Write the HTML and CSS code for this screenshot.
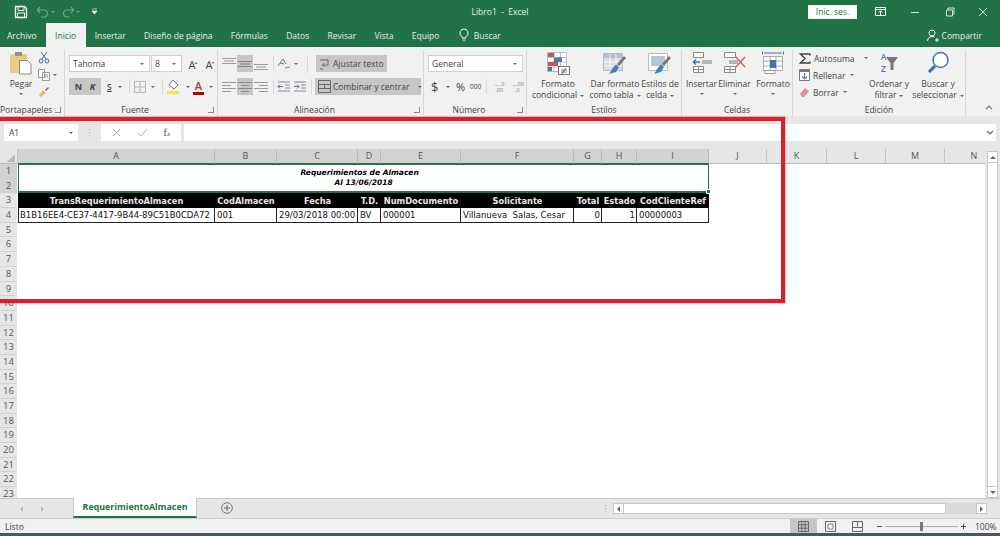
FILE: index.html
```html
<!DOCTYPE html>
<html lang="es">
<head>
  <meta charset="UTF-8">
  <title>Libro1 - Excel</title>
  <link rel="stylesheet" href="styles.css">
</head>
<body>

<svg class="defs" width="0" height="0">
  <symbol id="al-top" viewBox="0 0 16 14"><path d="M1 1.5h14M3 4h10M1 6.5h14" stroke="#999" fill="none"/></symbol>
  <symbol id="al-mid" viewBox="0 0 16 14"><path d="M1 4.5h14M3 7h10M1 9.5h14" stroke="#888" fill="none"/></symbol>
  <symbol id="al-bot" viewBox="0 0 16 14"><path d="M1 7.5h14M3 10h10M1 12.5h14" stroke="#999" fill="none"/></symbol>
  <symbol id="al-left" viewBox="0 0 16 14"><path d="M1 2.5h14M1 5.500h9M1 8.500h14M1 11.500h9" stroke="#999" fill="none"/></symbol>
  <symbol id="al-center" viewBox="0 0 16 14"><path d="M1 2.500h14M4 5.500h8M1 8.500h14M4 11.500h8" stroke="#888" fill="none"/></symbol>
  <symbol id="al-right" viewBox="0 0 16 14"><path d="M1 2.500h14M6 5.500h9M1 8.500h14M6 11.500h9" stroke="#999" fill="none"/></symbol>
</svg>

<div class="titlebar">
  <div class="qat">
    <svg width="14" height="14" viewBox="0 0 14 14"><path d="M1.500 1.500h9l2 2v9h-11z" fill="none" stroke="#fff" stroke-width="1.300"/><path d="M4 2v3.500h6V2M3.500 12.500V8h7v4.500" fill="none" stroke="#fff"/></svg>
    <svg class="undo" width="14" height="12" viewBox="0 0 14 12"><path d="M4 1 1.500 4 4 7M2 4h6a3.500 3.500 0 0 1 0 7H5" fill="none" stroke="#6fa98b" stroke-width="1.200"/></svg>
    <i class="caret pale"></i>
    <svg class="redo" width="14" height="12" viewBox="0 0 14 12"><path d="M10 1l2.500 3L10 7M12 4H6a3.500 3.500 0 0 0 0 7h3" fill="none" stroke="#6fa98b" stroke-width="1.200"/></svg>
    <i class="caret pale"></i>
    <svg class="custom" width="7" height="7" viewBox="0 0 7 7"><path d="M1 1h5M1 3h5l-2.500 3z" fill="#fff" stroke="#fff" stroke-width=".6"/></svg>
  </div>
  <div class="doc-title">Libro1 &nbsp;-&nbsp; Excel</div>
  <div class="win-controls">
    <span class="signin">Inic. ses.</span>
    <svg class="ctl-display" width="12" height="10" viewBox="0 0 12 10"><path d="M.5.500h10v8H.5zM.5 2.500h10M5.500 8V4M3.800 5.500l1.700-1.700 1.700 1.700" fill="none" stroke="#fff"/></svg>
    <svg class="ctl-min" width="10" height="10" viewBox="0 0 10 10"><path d="M1 5.500h8" stroke="#d7e6dd"/></svg>
    <svg class="ctl-max" width="10" height="10" viewBox="0 0 10 10"><path d="M1.500 3h6v6h-6zM3 3V1h6v6H7.500" fill="none" stroke="#d7e6dd"/></svg>
    <svg class="ctl-close" width="10" height="10" viewBox="0 0 10 10"><path d="M1 1l8 8M9 1 1 9" stroke="#d7e6dd"/></svg>
  </div>
</div>

<div class="tabs">
  <span class="tab tab-file">Archivo</span>
  <span class="tab active">Inicio</span>
  <span class="tab">Insertar</span>
  <span class="tab">Diseño de página</span>
  <span class="tab">Fórmulas</span>
  <span class="tab">Datos</span>
  <span class="tab">Revisar</span>
  <span class="tab">Vista</span>
  <span class="tab">Equipo</span>
  <span class="tab tab-search">
    <svg width="10" height="14" viewBox="0 0 10 14"><path d="M5 1a4 4 0 0 0-2.300 7.300c.5.400.6 1 .7 1.700h3.200c.1-.7.200-1.300.7-1.700A4 4 0 0 0 5 1zM3.500 12h3" fill="none" stroke="#fff"/></svg>
    Buscar
  </span>
  <span class="share">
    <svg width="12" height="13" viewBox="0 0 12 13"><circle cx="5" cy="4" r="3" fill="none" stroke="#fff"/><path d="M.5 12c.3-3 2-4.500 4.500-4.500 1 0 1.800.2 2.500.7M8 11h4M10 9v4" fill="none" stroke="#fff"/></svg>
    Compartir
  </span>
</div>

<div class="ribbon">
  <div class="group g-clip">
    <div class="group-body">
      <div class="big big-paste">
        <svg width="22" height="24" viewBox="0 0 22 24"><rect x="0" y="3" width="17" height="19" rx="1" fill="#eccb8a"/><rect x="5" y="1" width="7" height="4" fill="#8f8f8f"/><path d="M9.500 9.500h8l3.500 3.500v10H9.500z" fill="#fff" stroke="#888"/></svg>
        <span>Pegar</span>
        <i class="caret"></i>
      </div>
      <div class="clip-tools">
        <svg width="12" height="13" viewBox="0 0 12 13"><path d="M3 1l5 7M9 1 4 8" stroke="#666" fill="none"/><circle cx="3" cy="10" r="2" fill="none" stroke="#44709c"/><circle cx="9" cy="10" r="2" fill="none" stroke="#44709c"/></svg>
        <span class="tool-line"><svg width="12" height="12" viewBox="0 0 12 12"><path d="M.5.500h6v8h-6zM4.500 3.500h7v8h-7z" fill="#fff" stroke="#999"/><path d="M6 6h4M6 8h4" stroke="#6d93b7"/></svg><i class="caret"></i></span>
        <svg width="12" height="12" viewBox="0 0 12 12"><path d="M7 4l3-3 1 1-3 3z" fill="#666"/><path d="M1 9l4-5 3 3-5 4z" fill="#e2bb73"/></svg>
      </div>
    </div>
    <div class="group-label"><span>Portapapeles</span><i class="launcher"></i></div>
  </div>

  <div class="group g-font">
    <div class="group-body stack">
      <div class="row">
        <span class="select font-name">Tahoma<i class="caret"></i></span>
        <span class="select font-size">8<i class="caret"></i></span>
        <span class="grow-a">A<sup>▴</sup></span>
        <span class="shrink-a">A<sup>▾</sup></span>
      </div>
      <div class="row">
        <span class="toggle-pair"><b>N</b><b class="italic">K</b></span>
        <span class="underline-s">S</span><i class="caret gap"></i>
        <i class="vsep"></i>
        <svg class="border-ic" width="12" height="12" viewBox="0 0 12 12"><path d="M.5.500h11v11H.5zM6 .5v11M.5 6h11" fill="none" stroke="#b5b5b5"/></svg><i class="caret gap"></i>
        <i class="vsep"></i>
        <svg class="fill-ic" width="14" height="15" viewBox="0 0 14 15"><path d="M6 1l5 5-4 4-5-4z" fill="#fff" stroke="#777"/><path d="M0 12h12v3H0z" fill="#f2ea3a"/></svg><i class="caret gap"></i>
        <span class="font-color">A</span><i class="caret gap"></i>
      </div>
    </div>
    <div class="group-label"><span>Fuente</span><i class="launcher"></i></div>
  </div>

  <div class="group g-align">
    <div class="group-body stack">
      <div class="row">
        <span class="al"><svg width="16" height="14"><use href="#al-top"/></svg></span>
        <span class="al on"><svg width="16" height="14"><use href="#al-mid"/></svg></span>
        <span class="al"><svg width="16" height="14"><use href="#al-bot"/></svg></span>
        <i class="vsep"></i>
        <svg class="orient" width="14" height="12" viewBox="0 0 14 12"><path d="M1 8l5-7 3 5M3 5l4 1" fill="none" stroke="#777"/><path d="M8 10l5-1" stroke="#5a87b3"/></svg><i class="caret"></i>
        <i class="vsep after-orient"></i>
        <span class="wide-btn wrap"><svg width="11" height="13" viewBox="0 0 11 13"><path d="M1 3h8v5H4M5.500 6 3.500 8l2 2M1 12h3" fill="none" stroke="#666"/></svg>Ajustar texto</span>
      </div>
      <div class="row">
        <span class="al"><svg width="16" height="14"><use href="#al-left"/></svg></span>
        <span class="al on"><svg width="16" height="14"><use href="#al-center"/></svg></span>
        <span class="al"><svg width="16" height="14"><use href="#al-right"/></svg></span>
        <i class="vsep"></i>
        <svg class="indent" width="14" height="11" viewBox="0 0 14 11"><path d="M1 1h12M8 4h5M8 7h5M1 10h12" stroke="#888"/><path d="M1 5.500h5M1 5.500l2-2M1 5.500l2 2" stroke="#3f74ad" fill="none"/></svg>
        <svg class="indent" width="14" height="11" viewBox="0 0 14 11"><path d="M1 1h12M8 4h5M8 7h5M1 10h12" stroke="#888"/><path d="M6 5.500H1M6 5.500l-2-2M6 5.500l-2 2" stroke="#3f74ad" fill="none"/></svg>
        <i class="vsep after-indent"></i>
        <span class="wide-btn merge"><svg width="13" height="13" viewBox="0 0 13 13"><path d="M.5.500h12v12H.5zM.5 4.500h12M.5 8.500h12M6.500 4.500v4" fill="none" stroke="#666"/></svg>Combinar y centrar<i class="caret"></i></span>
      </div>
    </div>
    <div class="group-label"><span>Alineación</span><i class="launcher"></i></div>
  </div>

  <div class="group g-num">
    <div class="group-body stack">
      <div class="row"><span class="select num-format">General<i class="caret"></i></span></div>
      <div class="row num-tools">
        <span class="cur">$</span><i class="caret gap"></i>
        <span class="pct">%</span>
        <span class="thou">000</span>
        <i class="vsep"></i>
        <span class="dec"><em>←</em>,0<br>,00</span>
        <span class="dec"><em>→</em>,00<br>,0</span>
      </div>
    </div>
    <div class="group-label"><span>Número</span><i class="launcher"></i></div>
  </div>

  <div class="group g-styles">
    <div class="group-body">
      <div class="big b-cond">
        <svg width="24" height="24" viewBox="0 0 24 24"><path d="M1.500 1.500h19v19h-19zM1.500 6.500h19M1.500 11h19M1.500 16h19M8 1.500v19M14.500 1.500v19" fill="#fff" stroke="#bbb"/><path d="M2 2h6v4H2zM2 11h10v4H2z" fill="#c8525a"/><path d="M8 6.500h8v4.500H8z" fill="#4d79a8"/><path d="M2 16h4v4H2z" fill="#4d79a8"/><rect x="12.500" y="15.500" width="11" height="8" fill="#fff" stroke="#777"/><path d="M15 19h6M15 21h6M20 17l-4 6" stroke="#444" stroke-width=".7"/></svg>
        <span>Formato<br>condicional<i class="caret"></i></span>
      </div>
      <div class="big b-table">
        <svg width="24" height="24" viewBox="0 0 24 24"><path d="M.5 2.500h19v17H.500z" fill="#fff" stroke="#bbb"/><path d="M1 3h18v4H1z" fill="#aebdcc"/><path d="M1 7h18v12H1z" fill="#d5dde6"/><path d="M7 3v16M13 3v16M1 11h18M1 15h18" stroke="#f6f6f6"/><path d="M21 5l2 2-7 8-2-2z" fill="#777"/><path d="M13 13.500l3 2.500-3 5-7 2c2-2 3-6 7-9.500z" fill="#3f7fc0"/></svg>
        <span>Dar formato<br>como tabla<i class="caret"></i></span>
      </div>
      <div class="big b-cell">
        <svg width="24" height="24" viewBox="0 0 24 24"><path d="M.5 2.500h19v17H.500z" fill="#fff" stroke="#bbb"/><path d="M3 5h14v10H3z" fill="#b5c6d8"/><path d="M21 5l2 2-7 8-2-2z" fill="#777"/><path d="M13 13.500l3 2.500-3 5-7 2c2-2 3-6 7-9.500z" fill="#3f7fc0"/></svg>
        <span>Estilos de<br>celda<i class="caret"></i></span>
      </div>
    </div>
    <div class="group-label"><span>Estilos</span></div>
  </div>

  <div class="group g-cells">
    <div class="group-body">
      <div class="big b-ins">
        <svg width="22" height="24" viewBox="0 0 22 24"><path d="M2.500 1.500h10v5h-10zM2.500 15.500h10v6h-10zM7.500 15.500v6M2.500 18.500h10" fill="#fff" stroke="#888"/><path d="M11 9h10v4H11z" fill="#b5b5b5"/><path d="M2 11h7M2 11l3-2.500M2 11l3 2.500" stroke="#3f74ad" stroke-width="1.300" fill="none"/></svg>
        <span>Insertar</span><i class="caret"></i>
      </div>
      <div class="big b-del">
        <svg width="24" height="24" viewBox="0 0 24 24"><path d="M1.500 1.500h11v5h-11zM1.500 15.500h11v6h-11zM7 15.500v6M1.500 18.500h11" fill="#fff" stroke="#888"/><path d="M6 9h9v4H6z" fill="#b5b5b5"/><path d="M13 6l9 10M22 6l-9 10" stroke="#d9614c" stroke-width="1.400"/></svg>
        <span>Eliminar</span><i class="caret"></i>
      </div>
      <div class="big b-fmt">
        <svg width="24" height="24" viewBox="0 0 24 24"><path d="M1.500.500v3M22.500.500v3M3 2h18" stroke="#3f74ad" fill="none"/><path d="M2.500 5.500h19v14h-19zM9 5.500v14M15 5.500v14M2.500 10h19M2.500 15h19" fill="#fff" stroke="#aaa"/><path d="M9 9h6v8H9z" fill="#3f74ad"/><path d="M4 19.500h10v3H4z" fill="#fff" stroke="#999"/></svg>
        <span>Formato</span><i class="caret"></i>
      </div>
    </div>
    <div class="group-label"><span>Celdas</span></div>
  </div>

  <div class="group g-edit">
    <div class="group-body">
      <div class="edit-list">
        <span class="edit-line"><svg width="12" height="11" viewBox="0 0 12 11"><path d="M11 2.500V1H1.500L6 5.500 1.500 10H11V8.500" fill="none" stroke="#444" stroke-width="1.400"/></svg>Autosuma<i class="caret far"></i></span>
        <span class="edit-line"><svg width="11" height="12" viewBox="0 0 11 12"><path d="M.5.500h10v11H.500z" fill="#fff" stroke="#777"/><path d="M1 1h9v2H1z" fill="#777"/><path d="M5.500 4v6M3 7.500 5.500 10 8 7.500" stroke="#3f7fc0" stroke-width="1.200" fill="none"/></svg>Rellenar<i class="caret"></i></span>
        <span class="edit-line"><svg width="11" height="11" viewBox="0 0 11 11"><path d="M6 1l4 3-5 6H3L1 7z" fill="#e88a9a"/></svg>Borrar<i class="caret"></i></span>
      </div>
      <div class="big b-sort">
        <svg class="az" width="24" height="24" viewBox="0 0 24 24"><path d="M9 6h12l-4.500 6v7h-3v-7z" fill="#777"/></svg>
        <span class="az-letters"><em class="az-a">A</em><em class="az-z">Z</em></span>
        <span>Ordenar y<br>filtrar<i class="caret"></i></span>
      </div>
      <div class="big b-find">
        <svg width="24" height="24" viewBox="0 0 24 24"><circle cx="14.500" cy="9" r="7.500" fill="#fff" stroke="#3f7fc0" stroke-width="1.600"/><path d="M9 15l-6 6" stroke="#2f6fb3" stroke-width="3"/></svg>
        <span>Buscar y<br>seleccionar<i class="caret"></i></span>
      </div>
    </div>
    <div class="group-label"><span>Edición</span></div>
  </div>

  <svg class="collapse" width="8" height="5" viewBox="0 0 8 5"><path d="M1 4l3-3 3 3" fill="none" stroke="#777" stroke-width="1.200"/></svg>
</div>

<div class="formula-bar">
  <span class="name-box">A1<i class="caret"></i></span>
  <span class="fb-dots">⋮</span>
  <span class="fx-box">
    <svg width="9" height="9" viewBox="0 0 9 9"><path d="M1 1l7 7M8 1 1 8" stroke="#aaa"/></svg>
    <svg width="11" height="9" viewBox="0 0 11 9"><path d="M1 5l3 3 6-7" fill="none" stroke="#aaa"/></svg>
    <span class="fx"><em>f</em><small>x</small></span>
  </span>
  <span class="formula-input"><svg width="8" height="5" viewBox="0 0 8 5"><path d="M1 1l3 3 3-3" fill="none" stroke="#666" stroke-width="1.200"/></svg></span>
</div>

<div class="sheet-wrap">
  <div class="sheet">
    <div class="col-heads">
      <span class="corner"><i></i></span>
      <span class="sel">A</span><span class="sel">B</span><span class="sel">C</span><span class="sel">D</span><span class="sel">E</span><span class="sel">F</span><span class="sel">G</span><span class="sel">H</span><span class="sel">I</span>
      <span>J</span><span>K</span><span>L</span><span>M</span><span>N</span>
    </div>
    <div class="sheet-body">
      <div class="row-heads">
        <span class="sel">1</span><span class="sel">2</span><span>3</span><span>4</span><span>5</span><span>6</span><span>7</span><span>8</span><span>9</span><span>10</span><span>11</span><span>12</span><span>13</span><span>14</span><span>15</span><span>16</span><span>17</span><span>18</span><span>19</span><span>20</span><span>21</span><span>22</span><span>23</span>
      </div>
      <div class="cells">
        <div class="report-title">Requerimientos de Almacen&nbsp;&nbsp;&nbsp;<br>Al 13/06/2018<i class="fill-handle"></i></div>
        <div class="th">TransRequerimientoAlmacen</div>
        <div class="th">CodAlmacen</div>
        <div class="th">Fecha</div>
        <div class="th">T.D.</div>
        <div class="th">NumDocumento</div>
        <div class="th">Solicitante</div>
        <div class="th">Total</div>
        <div class="th">Estado</div>
        <div class="th">CodClienteRef</div>
        <div class="td">B1B16EE4-CE37-4417-9B44-89C51B0CDA72</div>
        <div class="td">001</div>
        <div class="td">29/03/2018 00:00</div>
        <div class="td">BV</div>
        <div class="td">000001</div>
        <div class="td">Villanueva &nbsp;Salas, Cesar</div>
        <div class="td num">0</div>
        <div class="td num">1</div>
        <div class="td">00000003</div>
      </div>
    </div>
  </div>
  <div class="vscroll">
    <span class="sb-btn"><i class="tri up"></i></span>
    <span class="sb-thumb"></span>
    <span class="sb-btn"><i class="tri down"></i></span>
  </div>
</div>

<div class="sheet-tabs">
  <span class="nav-arrows"><i class="tri left"></i><i class="tri right"></i></span>
  <span class="sheet-tab">RequerimientoAlmacen</span>
  <svg class="add-sheet" width="12" height="12" viewBox="0 0 12 12"><circle cx="6" cy="6" r="5.300" fill="none" stroke="#777"/><path d="M3 6h6M6 3v6" stroke="#666"/></svg>
  <span class="tab-dots">⋮</span>
  <div class="hscroll">
    <span class="sb-btn"><i class="tri left dark"></i></span>
    <span class="sb-thumb"></span>
    <span class="sb-track"></span>
    <span class="sb-btn"><i class="tri right dark"></i></span>
  </div>
</div>

<div class="statusbar">
  <span class="status-text">Listo</span>
  <div class="views">
    <span class="view on"><svg width="11" height="11" viewBox="0 0 11 11"><path d="M.5.500h10v10H.500zM3.800.5v10M7.200.5v10M.5 3.800h10M.5 7.200h10" fill="none" stroke="#666"/></svg></span>
    <span class="view"><svg width="11" height="11" viewBox="0 0 11 11"><path d="M.5.500h10v10H.500z" fill="none" stroke="#666"/><path d="M3 3h5v5H3z" fill="none" stroke="#888"/></svg></span>
    <span class="view"><svg width="11" height="11" viewBox="0 0 11 11"><path d="M.5.500h10v10H.500zM5.500.5v5M.5 6.500h10" fill="none" stroke="#666"/></svg></span>
  </div>
  <div class="zoom-ctl">
    <span class="z-minus"></span>
    <span class="z-track"><i></i></span>
    <span class="z-plus"></span>
    <span class="z-val">100%</span>
  </div>
</div>
<div class="taskbar-edge"></div>

<div class="callout"></div>

</body>
</html>
```

FILE: styles.css
```css
* {
  box-sizing: border-box;
}
html, body {
  margin: 0;
  height: 536px;
  overflow: hidden;
}
body {
  position: relative;
  display: flex;
  flex-direction: column;
  font-family: "Open Sans", Arial, sans-serif;
  font-size: 8.500px;
  color: #444;
  background-color: #e6e6e6;
}
i, em {
  font-style: normal;
}
.defs {
  position: absolute;
}
svg {
  display: block;
  flex: none;
}

/* title bar */
.titlebar {
  height: 23px;
  background-color: #217346;
  color: #fff;
  display: grid;
  grid-template-columns: 1fr auto 1fr;
  align-items: center;
}
.qat {
  display: flex;
  align-items: center;
  padding-left: 14px;
}
.qat .undo {
  margin-left: 8px;
}
.qat .redo {
  margin-left: 6px;
}
.qat .caret {
  margin-left: 1px;
}
.qat .custom {
  margin-left: 11px;
}
.doc-title {
  font-size: 8.500px;
  color: #e4efe9;
}
.win-controls {
  display: flex;
  align-items: center;
  justify-content: flex-end;
}
.signin {
  width: 49px;
  height: 14px;
  margin-right: 18px;
  background-color: #fff;
  color: #217346;
  text-align: center;
  line-height: 14px;
}
.ctl-min {
  margin-left: 23px;
}
.ctl-max {
  margin-left: 25px;
}
.ctl-close {
  margin-left: 23px;
  margin-right: 12px;
}

/* tabs */
.tabs {
  height: 24px;
  background-color: #217346;
  color: #e4efe9;
  display: flex;
  align-items: stretch;
  padding-left: 7px;
}
.tab {
  display: flex;
  align-items: center;
  margin-right: 18.300px;
  white-space: nowrap;
}
.tab-file {
  margin-right: 9px;
}
.tab.active {
  width: 40px;
  justify-content: center;
  margin-right: 9px;
  background-color: #f1f1f1;
  color: #217346;
}
.tab-search {
  gap: 5px;
  margin-left: 1px;
}
.share {
  margin-left: auto;
  margin-right: 18px;
  display: flex;
  align-items: center;
  gap: 3px;
}

/* ribbon */
.ribbon {
  height: 69px;
  background-color: #f1f1f1;
  display: flex;
  padding-top: 3px;
  position: relative;
}
.group {
  display: flex;
  flex-direction: column;
  height: 66px;
  border-right: 1px solid #d8d8d8;
  flex: none;
}
.g-clip { width: 65px; }
.g-font { width: 153px; }
.g-align { width: 206px; }
.g-num { width: 103px; }
.g-styles { width: 155px; }
.g-cells { width: 111px; }
.g-edit { width: 173px; }
.group-body {
  flex: 1;
  min-height: 0;
  display: flex;
}
.group-label {
  height: 13px;
  flex: none;
  display: flex;
  align-items: center;
  line-height: 13px;
}
.group-label span {
  flex: 1;
  text-align: center;
}
.launcher {
  margin: 0 3px;
  width: 6px;
  height: 6px;
  border-right: 1px solid #888;
  border-bottom: 1px solid #888;
}
.caret {
  display: inline-block;
  width: 0;
  height: 0;
  border-left: 2px solid transparent;
  border-right: 2px solid transparent;
  border-top: 2px solid #666;
  vertical-align: middle;
  margin-left: 3px;
  flex: none;
}
.caret.pale {
  border-top-color: #6fa98b;
}
.caret.gap {
  margin: 0 0 0 5px;
}
.big {
  display: flex;
  flex-direction: column;
  align-items: center;
  line-height: 11.500px;
  text-align: center;
  white-space: nowrap;
  padding-top: 1px;
  position: relative;
  flex: none;
}
.big svg {
  margin-bottom: 2.500px;
}
.big > .caret {
  margin: 4px 0 0;
}
.big-paste {
  width: 30px;
  margin-left: 6px;
}
.clip-tools {
  margin-left: 2px;
  padding-top: 1px;
  display: flex;
  flex-direction: column;
  gap: 5px;
}
.tool-line {
  display: flex;
  align-items: center;
}
.stack {
  flex-direction: column;
  gap: 6px;
  padding-top: 5px;
}
.row {
  display: flex;
  align-items: center;
  height: 17px;
  flex: none;
}
.row > * {
  flex: none;
}
.select {
  height: 17px;
  background-color: #fff;
  border: 1px solid #d0d0d0;
  display: flex;
  align-items: center;
  justify-content: space-between;
  padding: 0 5px 0 3px;
  white-space: nowrap;
}
.g-font .row {
  padding-left: 4px;
}
.font-name {
  width: 81px;
}
.font-size {
  width: 31px;
  margin-left: 1px;
}
.grow-a, .shrink-a {
  font-size: 11px;
  width: 16px;
  text-align: center;
  line-height: 17px;
  margin-left: 1px;
}
.grow-a {
  margin-left: 3px;
}
.grow-a sup, .shrink-a sup {
  font-size: 4px;
}
.toggle-pair {
  width: 32px;
  height: 17px;
  background-color: #c6c6c6;
  display: flex;
  align-items: center;
  justify-content: space-around;
  padding: 0 2px;
  font-size: 9px;
}
.italic {
  font-style: italic;
}
.underline-s {
  width: 6px;
  margin-left: 6px;
  text-decoration: underline;
  font-weight: 600;
}
.vsep {
  width: 1px;
  height: 15px;
  background-color: #d8d8d8;
  margin: 0 4px 0 7px;
}
.font-color {
  margin-left: 3px;
  width: 11px;
  font-size: 11px;
  font-weight: 600;
  line-height: 13px;
  text-align: center;
  color: #a83a3a;
  border-bottom: 3px solid #c00000;
}
.g-align .row {
  padding-left: 3px;
}
.al {
  width: 16px;
  height: 17px;
  display: flex;
  align-items: center;
  justify-content: center;
}
.al.on {
  background-color: #c6c6c6;
}
.g-align .vsep {
  margin: 0 3px 0 4px;
}
.g-align .vsep.after-orient {
  margin: 0 8px 0 9px;
}
.g-align .vsep.after-indent {
  margin: 0 3px 0 2px;
}
.wide-btn {
  height: 17px;
  background-color: #c6c6c6;
  display: flex;
  align-items: center;
  gap: 2px;
  padding: 0 3px;
  white-space: nowrap;
}
.wrap {
  width: 71px;
  gap: 3px;
}
.merge {
  width: 106px;
}
.merge .caret {
  margin-left: 6px;
}
.indent {
  margin-right: 2px;
}
.g-num .row {
  padding-left: 4px;
}
.num-format {
  width: 95px;
}
.g-num .num-tools {
  padding-left: 7px;
}
.cur {
  font-size: 13px;
  width: 10px;
}
.pct {
  font-size: 11px;
  margin-left: 6px;
}
.thou {
  font-size: 6.500px;
  margin-left: 5px;
}
.num-tools .vsep {
  margin: 0 3px 0 5px;
}
.dec {
  width: 18px;
  font-size: 5.500px;
  line-height: 6px;
  text-align: center;
  color: #777;
}
.dec em {
  color: #3f74ad;
}
.b-cond { width: 56px; margin-left: 3px; }
.b-table { width: 58px; }
.b-cell { width: 36px; margin-left: -2px; }
.g-cells .big { width: 33px; }
.g-cells .b-ins { margin-left: 3px; }
.g-cells .b-fmt { margin-left: 4px; width: 36px; }
.edit-list {
  width: 76px;
  padding: 1px 0 0 6px;
  display: flex;
  flex-direction: column;
  gap: 3px;
}
.edit-line {
  display: flex;
  align-items: center;
  gap: 3px;
  height: 14px;
  white-space: nowrap;
}
.edit-line .caret {
  margin-left: 1px;
}
.edit-line .far {
  margin-left: 6px;
}
.b-sort { width: 46px; margin-left: -3px; }
.az-letters {
  position: absolute;
  left: 13px;
  top: 1px;
  width: 9px;
  display: flex;
  flex-direction: column;
  gap: 1px;
  font-size: 8.500px;
  font-weight: 600;
  line-height: 11px;
}
.az-a {
  color: #3f7fc0;
}
.az-z {
  color: #8a5aa5;
}
.b-find { width: 52px; }
.collapse {
  position: absolute;
  left: 985px;
  top: 58px;
}

/* formula bar */
.formula-bar {
  height: 33px;
  background-color: #e6e6e6;
  display: flex;
  align-items: flex-start;
  padding: 8px 4px 0;
}
.name-box, .fx-box, .formula-input {
  height: 17px;
  background-color: #fff;
  display: flex;
  align-items: center;
}
.name-box {
  width: 74px;
  padding: 0 5px;
  justify-content: space-between;
}
.fb-dots {
  width: 23px;
  text-align: center;
  line-height: 17px;
  color: #aaa;
}
.fx-box {
  width: 80px;
  justify-content: space-around;
  padding: 0 3px;
}
.fx {
  font-family: "Liberation Serif", serif;
  font-style: italic;
  font-size: 10px;
}
.fx small {
  font-size: 7px;
}
.formula-input {
  flex: 1;
  margin-left: 3px;
  justify-content: flex-end;
  padding-right: 2px;
}

/* sheet */
.sheet-wrap {
  height: 349px;
  display: flex;
  background-color: #e6e6e6;
}
.sheet {
  width: 985px;
  display: flex;
  flex-direction: column;
  overflow: hidden;
}
.col-heads {
  height: 15px;
  flex: none;
  display: grid;
  grid-template-columns: 18px 197px 62px 81px 23px 80px 113px 28px 35px 72px 58px 60px 59px 59px 59px;
  font-size: 9px;
  line-height: 14px;
  text-align: center;
  color: #555;
  border-bottom: 1px solid #bbb;
}
.col-heads span {
  border-right: 1px solid #c4c4c4;
}
.col-heads .sel {
  background-color: #d2d2d2;
  border-right-color: #b8b8b8;
  border-bottom: 1px solid #217346;
}
.corner {
  position: relative;
}
.corner i {
  position: absolute;
  right: 2px;
  bottom: 2px;
  border-left: 8px solid transparent;
  border-bottom: 8px solid #b8b8b8;
}
.sheet-body {
  flex: 1;
  display: flex;
  min-height: 0;
}
.row-heads {
  width: 18px;
  flex: none;
  display: flex;
  flex-direction: column;
  border-right: 1px solid #b5b5b5;
}
.row-heads span {
  height: 14.700px;
  flex: none;
  font-size: 9.500px;
  line-height: 14px;
  text-align: center;
  color: #555;
  border-bottom: 1px solid #d0d0d0;
}
.row-heads .sel {
  background-color: #d2d2d2;
}
.cells {
  flex: 1;
  background-color: #fff;
  display: grid;
  grid-template-columns: 197px 62px 81px 23px 80px 113px 28px 35px 72px;
  grid-auto-rows: 14.700px;
  align-content: start;
  font-family: "DejaVu Sans", sans-serif;
  font-size: 8.500px;
  color: #111;
  margin-left: -1px;
  padding-left: 1px;
}
.report-title {
  grid-column: 1 / 10;
  grid-row: span 2;
  position: relative;
  border: 1px solid #217346;
  border-bottom-width: 2px;
  text-align: center;
  font-weight: bold;
  font-style: italic;
  font-size: 7.500px;
  line-height: 10px;
  padding-top: 3px;
  color: #000;
}
.fill-handle {
  position: absolute;
  right: -3px;
  bottom: -3px;
  width: 5px;
  height: 5px;
  background-color: #217346;
  border: 1px solid #fff;
}
.th {
  background-color: #000;
  color: #e8e8e8;
  font-weight: bold;
  font-size: 8.250px;
  text-align: center;
  line-height: 14px;
  padding-top: 1px;
  white-space: nowrap;
  overflow: hidden;
}
.td {
  padding: 1px 0 0 2px;
  line-height: 13px;
  white-space: nowrap;
  overflow: hidden;
  border-right: 1px solid #222;
  border-bottom: 1px solid #222;
}
.td:nth-child(11) {
  border-left: 1px solid #222;
  padding-left: 1px;
}
.td.num {
  text-align: right;
  padding-right: 1px;
}
.vscroll {
  flex: 1;
  display: flex;
  flex-direction: column;
  padding: 2px 2px 0;
}
.sb-btn {
  background-color: #fff;
  border: 1px solid #c8c8c8;
  display: flex;
  align-items: center;
  justify-content: center;
  flex: none;
}
.vscroll .sb-btn {
  height: 12px;
}
.vscroll .sb-thumb {
  flex: 1;
  background-color: #fff;
  border: 1px solid #c8c8c8;
  border-width: 0 1px;
}
.tri {
  display: inline-block;
  width: 0;
  height: 0;
}
.tri.up {
  border-left: 3px solid transparent;
  border-right: 3px solid transparent;
  border-bottom: 3px solid #666;
}
.tri.down {
  border-left: 3px solid transparent;
  border-right: 3px solid transparent;
  border-top: 3px solid #666;
}
.tri.left {
  border-top: 3px solid transparent;
  border-bottom: 3px solid transparent;
  border-right: 3px solid #bbb;
}
.tri.right {
  border-top: 3px solid transparent;
  border-bottom: 3px solid transparent;
  border-left: 3px solid #bbb;
}
.tri.left.dark {
  border-right-color: #666;
}
.tri.right.dark {
  border-left-color: #666;
}

/* sheet tabs and h scroll */
.sheet-tabs {
  height: 21px;
  background-color: #e6e6e6;
  border-top: 1px solid #c8c8c8;
  border-bottom: 1px solid #d0d0d0;
  display: flex;
  align-items: flex-start;
}
.nav-arrows {
  width: 73px;
  height: 19px;
  display: flex;
  align-items: center;
  gap: 18px;
  padding-left: 20px;
}
.sheet-tab {
  width: 124px;
  height: 20px;
  margin-top: -1px;
  background-color: #fff;
  border-left: 1px solid #c8c8c8;
  border-right: 1px solid #c8c8c8;
  border-bottom: 2px solid #217346;
  color: #217346;
  font-weight: 700;
  font-size: 8.900px;
  text-align: center;
  line-height: 18px;
}
.add-sheet {
  margin: 3px 0 0 24px;
}
.tab-dots {
  margin-left: 368px;
  width: 12px;
  line-height: 19px;
  color: #aaa;
}
.hscroll {
  display: flex;
  flex: 1;
  height: 11px;
  margin-top: 4px;
}
.hscroll .sb-btn {
  width: 11px;
}
.hscroll .sb-thumb {
  width: 322px;
  background-color: #fff;
  border: 1px solid #c8c8c8;
  border-width: 1px 1px 1px 0;
}
.hscroll .sb-track {
  width: 30px;
  background-color: #dadada;
}
.statusbar {
  height: 14px;
  background-color: #f1f1f1;
  display: flex;
  align-items: center;
  padding-left: 5px;
}
.status-text {
  width: 785px;
}
.views {
  display: flex;
  height: 14px;
}
.view {
  width: 27px;
  display: flex;
  align-items: center;
  justify-content: center;
}
.view.on {
  background-color: #c6c6c6;
}
.zoom-ctl {
  display: flex;
  align-items: center;
  margin-left: 6px;
}
.z-minus, .z-plus {
  width: 5px;
  height: 1px;
  background-color: #555;
  position: relative;
}
.z-plus::after {
  content: "";
  position: absolute;
  left: 2px;
  top: -2px;
  width: 1px;
  height: 5px;
  background-color: #555;
}
.z-track {
  width: 73px;
  height: 1px;
  margin: 0 3px;
  background-color: #aaa;
  position: relative;
}
.z-track i {
  position: absolute;
  left: 35px;
  top: -4px;
  width: 3px;
  height: 9px;
  background-color: #777;
}
.z-val {
  margin-left: 9px;
}
.taskbar-edge {
  height: 3px;
  background-color: #44586a;
}

/* annotation drawn over the screenshot */
.callout {
  position: absolute;
  left: -8px;
  top: 117px;
  width: 793px;
  height: 186px;
  border: 4px solid #d9202e;
  box-shadow: 0 0 1px 1px rgba(217, 32, 46, 0.25);
  pointer-events: none;
}
```
